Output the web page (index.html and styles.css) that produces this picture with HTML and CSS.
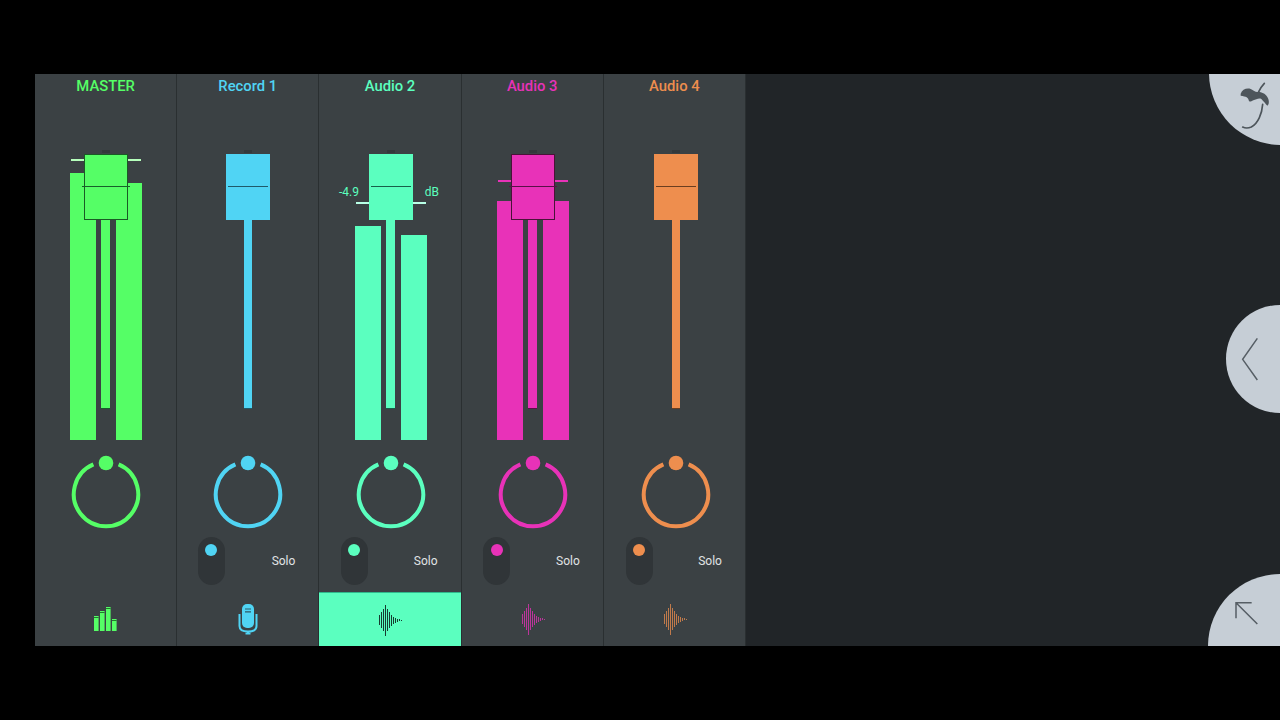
FILE: index.html
```html
<!DOCTYPE html>
<html lang="en">
<head>
<meta charset="utf-8">
<title>Mixer</title>
<link rel="stylesheet" href="styles.css">
</head>
<body>
<main class="app">
  <section class="mixer">
    <div class="channel c-green">
      <div class="label">MASTER</div>
      <div class="fader peak t61">
        <div class="meters">
          <i class="bar" style="height:267px"></i><i class="track" style="height:200px"></i><i class="bar" style="height:257px"></i>
        </div>
        <span class="tick tick-l light"></span><span class="tick tick-r light"></span>
        <div class="cap"></div>
      </div>
      <svg class="knob" viewBox="0 0 72 76"><path class="ring" d="M23.400 10.400A32.200 32.200 0 1 0 48.600 10.400"/><circle class="pan" cx="36" cy="9" r="7.300"/></svg>
      <div class="foot">
        <svg class="icon" width="24" height="26" viewBox="0 0 24 26"><g class="bars"><rect x="0" y="10" width="4.600" height="15"/><rect x="6" y="5" width="4.600" height="20"/><rect x="12" y="1" width="4.600" height="24"/><rect x="18" y="13" width="4.600" height="12"/></g><g class="bars-gap"><rect x="0" y="11" width="4.600" height=".9"/><rect x="6" y="6" width="4.600" height=".9"/><rect x="12" y="2" width="4.600" height=".9"/><rect x="18" y="14" width="4.600" height=".9"/></g></svg>
      </div>
    </div>

    <div class="channel c-blue">
      <div class="label">Record 1</div>
      <div class="fader">
        <div class="meters">
          <i class="bar" style="height:0"></i><i class="track thin" style="height:200px"></i><i class="bar" style="height:0"></i>
        </div>
        <div class="cap"></div>
      </div>
      <svg class="knob" viewBox="0 0 72 76"><path class="ring" d="M23.400 10.400A32.200 32.200 0 1 0 48.600 10.400"/><circle class="pan" cx="36" cy="9" r="7.300"/></svg>
      <div class="solo"><div class="toggle"><span class="dot"></span></div><span class="solo-text">Solo</span></div>
      <div class="foot">
        <svg class="icon" width="22" height="32" viewBox="0 0 22 32"><path class="mic-cradle" d="M2.500 11v12c0 4 3 5.500 8.500 5.500s8.500-1.500 8.500-5.500V11"/><path class="mic-stem" d="M11 28v3M8.500 30.500h5"/><rect class="mic-body" x="5" y="1" width="12" height="24" rx="5"/><path class="mic-slit" d="M8 6h6M8 8.800h6"/></svg>
      </div>
    </div>

    <div class="channel c-teal">
      <div class="label">Audio 2</div>
      <div class="fader">
        <div class="meters">
          <i class="bar" style="height:214px"></i><i class="track" style="height:200px"></i><i class="bar" style="height:205px"></i>
        </div>
        <span class="tick tick-l t104"></span><span class="tick tick-r t104"></span>
        <span class="read read-l">-4.9</span><span class="read read-r">dB</span>
        <div class="cap"></div>
      </div>
      <svg class="knob" viewBox="0 0 72 76"><path class="ring" d="M23.400 10.400A32.200 32.200 0 1 0 48.600 10.400"/><circle class="pan" cx="36" cy="9" r="7.300"/></svg>
      <div class="solo"><div class="toggle"><span class="dot"></span></div><span class="solo-text">Solo</span></div>
      <div class="foot active">
        <svg class="icon wave" width="23" height="32" viewBox="0 0 23 32"><path d="M1 11v10M3 8v16M5 5v22M7 .5v31M9 5v22M11 8v16M13 10.500v11M15 12.500v7M17 13.500v5M19 14.500v3M21 15v2M23 15.500v1"/></svg>
      </div>
    </div>

    <div class="channel c-pink">
      <div class="label">Audio 3</div>
      <div class="fader peak">
        <div class="meters">
          <i class="bar" style="height:239px"></i><i class="track" style="height:200px"></i><i class="bar" style="height:239px"></i>
        </div>
        <span class="tick tick-l t82"></span><span class="tick tick-r t82"></span>
        <div class="cap"></div>
      </div>
      <svg class="knob" viewBox="0 0 72 76"><path class="ring" d="M23.400 10.400A32.200 32.200 0 1 0 48.600 10.400"/><circle class="pan" cx="36" cy="9" r="7.300"/></svg>
      <div class="solo"><div class="toggle"><span class="dot"></span></div><span class="solo-text">Solo</span></div>
      <div class="foot">
        <svg class="icon wave dim" width="23" height="32" viewBox="0 0 23 32"><path d="M1 11v10M3 8v16M5 5v22M7 .5v31M9 5v22M11 8v16M13 10.500v11M15 12.500v7M17 13.500v5M19 14.500v3M21 15v2M23 15.500v1"/></svg>
      </div>
    </div>

    <div class="channel c-orange">
      <div class="label">Audio 4</div>
      <div class="fader">
        <div class="meters">
          <i class="bar" style="height:0"></i><i class="track thin" style="height:200px"></i><i class="bar" style="height:0"></i>
        </div>
        <div class="cap"></div>
      </div>
      <svg class="knob" viewBox="0 0 72 76"><path class="ring" d="M23.400 10.400A32.200 32.200 0 1 0 48.600 10.400"/><circle class="pan" cx="36" cy="9" r="7.300"/></svg>
      <div class="solo"><div class="toggle"><span class="dot"></span></div><span class="solo-text">Solo</span></div>
      <div class="foot">
        <svg class="icon wave dim" width="23" height="32" viewBox="0 0 23 32"><path d="M1 11v10M3 8v16M5 5v22M7 .5v31M9 5v22M11 8v16M13 10.500v11M15 12.500v7M17 13.500v5M19 14.500v3M21 15v2M23 15.500v1"/></svg>
      </div>
    </div>
  </section>

  <div class="round round-top">
    <svg class="glyph glyph-top" width="90" height="90" viewBox="0 0 270 270">
      <path class="fruit" d="M152 86C156 74 170 68 182 72C192 76 198 84 206 80C214 82 226 84 232 96C238 106 238 118 232 122C226 116 222 110 214 102C206 98 198 104 190 106C182 110 178 112 176 106C176 98 168 94 152 92Z"/>
      <path class="fruit-line" d="M205 82C210 72 216 62 223 55M218 118C216 146 204 176 184 186C174 190 166 190 158 186"/>
    </svg>
  </div>
  <div class="round round-mid">
    <svg class="glyph glyph-mid" width="80" height="125" viewBox="0 0 240 375"><path class="line" d="M172 130L128 193L172 255"/></svg>
  </div>
  <div class="round round-bot">
    <svg class="glyph glyph-bot" width="90" height="90" viewBox="0 0 270 270"><path class="line" d="M138 160V113H185M138 113L202 177"/></svg>
  </div>
</main>
</body>
</html>
```

FILE: styles.css
```css
* { box-sizing: border-box; }
html, body { margin: 0; height: 100%; }
body {
  background: #000;
  padding: 74px 0 74px 35px;
  font-family: Roboto, "Liberation Sans", sans-serif;
  overflow: hidden;
}
.app {
  position: relative;
  height: 572px;
  background: #212528;
  overflow: hidden;
}
.mixer {
  display: grid;
  grid-template-columns: repeat(5, 142.2px);
  height: 100%;
  width: 711px;
}
.channel {
  --s: 0px;
  display: flex;
  flex-direction: column;
  background: #3b4144;
  border-right: 1px solid #2a2f31;
  color: var(--c);
}
.c-green { --c: #55fe66; --edge: #1a5a25; --line: #17602a; --tick: #b6ffbc; }
.c-blue { --c: #50d4f4; --edge: #50d4f4; --line: #1f5a6a; --tick: #50d4f4; }
.c-teal { --c: #5bffbf; --edge: #5bffbf; --line: #18604a; --tick: #b8ffe6; --s: 1px; }
.c-pink { --c: #e832b8; --edge: #4a1238; --line: #5a1048; --tick: #e832b8; --s: 1px; }
.c-orange { --c: #ee8e4e; --edge: #ee8e4e; --line: #6b3e20; --tick: #ee8e4e; --s: 1.5px; }

.label {
  height: 24px;
  line-height: 24px;
  text-align: center;
  font-size: 14.800px;
  font-weight: 500;
}
.fader {
  position: relative;
  flex: none;
  width: 72px;
  height: 342px;
  margin-left: calc(34.6px + var(--s));
}
.meters {
  display: flex;
  align-items: flex-end;
  height: 100%;
}
.bar {
  display: block;
  flex: none;
  width: 26px;
  background: var(--c);
}
.track {
  display: block;
  flex: none;
  width: 9px;
  margin: 0 6px 32px 5px;
  background: var(--c);
  box-shadow: 0 1px 0 var(--line);
}
.track.thin {
  width: 8px;
  margin: 0 6px 32px 6px;
}
.cap {
  position: absolute;
  top: 56px;
  left: 14px;
  width: 44px;
  height: 66px;
  background: var(--c);
  border: 1px solid var(--edge);
}
.cap::before {
  content: "";
  position: absolute;
  top: 31px;
  left: 1px;
  right: 1px;
  height: 1px;
  background: var(--line);
}
.peak .cap { border-width: 1.500px; }
.peak .cap::before { left: -3px; right: -3px; }
.cap::after {
  content: "";
  position: absolute;
  top: -5px;
  left: 17px;
  width: 8px;
  height: 3px;
  background: #33383b;
}
.tick {
  position: absolute;
  top: 61px;
  width: 13px;
  height: 1.500px;
  background: var(--tick);
}
.tick-l { left: 1px; }
.tick-r { right: 1px; }
.t104 { top: 104px; }
.t82 { top: 82px; }
.read {
  position: absolute;
  top: 87px;
  font-size: 12px;
  line-height: 14px;
}
.read-l { left: -16px; }
.read-r { right: -12px; }

.knob {
  display: block;
  flex: none;
  width: 72px;
  height: 76px;
  margin: 14px 0 0 calc(34.6px + var(--s));
}
.ring {
  fill: none;
  stroke: var(--c);
  stroke-width: 4;
}
.pan { fill: var(--c); }

.solo {
  display: flex;
  flex: none;
  justify-content: space-between;
  align-items: center;
  height: 48px;
  margin-top: 7px;
  padding: 0 23px 0 calc(21px + var(--s) - 0.5px);
}
.toggle {
  display: flex;
  justify-content: center;
  width: 27px;
  height: 48px;
  padding-top: 7px;
  border-radius: 14px;
  background: #303538;
}
.dot {
  width: 12px;
  height: 12px;
  border-radius: 50%;
  background: var(--c);
}
.solo-text {
  margin-top: -1px;
  color: #e0e3e4;
  font-size: 12px;
}

.foot {
  display: flex;
  flex: none;
  justify-content: center;
  align-items: center;
  height: 54px;
  margin-top: auto;
}
.foot.active {
  background: var(--c);
  border-top: 1px solid #2fb98c;
  color: #173b30;
}
.icon { display: block; }
.bars { fill: var(--c); }
.bars-gap { fill: #1f6a2a; }
.wave { overflow: visible; }
.wave path {
  fill: none;
  stroke: currentColor;
  stroke-width: 1;
  shape-rendering: crispEdges;
}
.wave.dim { opacity: .75; }
.mic-cradle, .mic-stem {
  fill: none;
  stroke: var(--c);
  stroke-width: 2;
}
.mic-body { fill: var(--c); }
.mic-slit {
  fill: none;
  stroke: #2c5866;
  stroke-width: 1.200;
}

.round {
  position: absolute;
  border-radius: 50%;
  background: #c6ced6;
}
.round-top {
  top: -73px;
  left: 1174px;
  width: 144px;
  height: 144px;
}
.round-mid {
  top: 231px;
  left: 1191px;
  width: 108px;
  height: 108px;
}
.round-bot {
  top: 500px;
  left: 1173px;
  width: 144px;
  height: 144px;
}
.glyph {
  position: absolute;
  display: block;
  overflow: visible;
}
.glyph-top { top: 64px; left: -19px; }
.glyph-mid { top: -10px; left: -26px; }
.glyph-bot { top: -9px; left: -18px; }
.fruit { fill: #4d555b; }
.fruit-line {
  fill: none;
  stroke: #4d555b;
  stroke-width: 5;
  stroke-linecap: round;
}
.line {
  fill: none;
  stroke: #565e65;
  stroke-width: 4.500;
}
```
